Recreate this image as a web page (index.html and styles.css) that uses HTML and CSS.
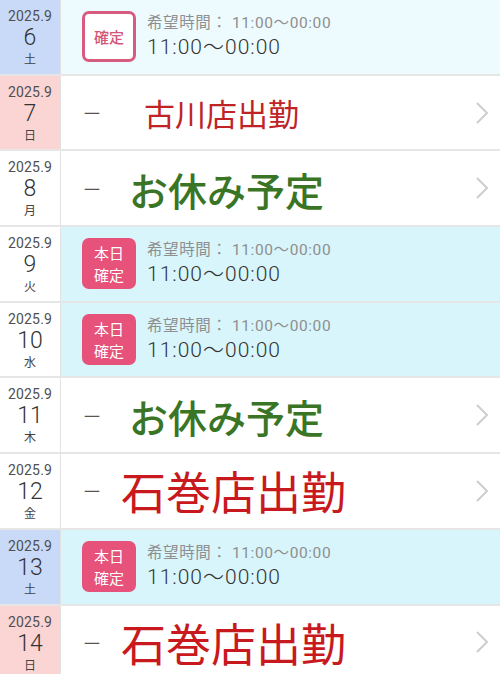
FILE: index.html
```html
<!DOCTYPE html>
<html lang="ja">
<head>
<meta charset="utf-8">
<link rel="stylesheet" href="styles.css">
</head>
<body>
<div class="list">
  <div class="row">
    <div class="date sat"><span class="ym">2025.9</span><span class="day">6</span><span class="wd">土</span></div>
    <div class="body pale">
      <div class="badge outline">確定</div>
      <div class="hope"><div class="hope-label">希望時間： 11:00〜00:00</div><div class="hope-time">11:00〜00:00</div></div>
    </div>
  </div>
  <div class="row">
    <div class="date sun"><span class="ym">2025.9</span><span class="day">7</span><span class="wd">日</span></div>
    <div class="body">
      <span class="dash">－</span><span class="status furukawa">古川店出勤</span>
      <svg class="chev" viewBox="0 0 14 22"><polyline points="2,1 12,11 2,21"/></svg>
    </div>
  </div>
  <div class="row">
    <div class="date"><span class="ym">2025.9</span><span class="day">8</span><span class="wd">月</span></div>
    <div class="body">
      <span class="dash">－</span><span class="status rest">お休み予定</span>
      <svg class="chev" viewBox="0 0 14 22"><polyline points="2,1 12,11 2,21"/></svg>
    </div>
  </div>
  <div class="row">
    <div class="date"><span class="ym">2025.9</span><span class="day">9</span><span class="wd">火</span></div>
    <div class="body today">
      <div class="badge filled">本日<br>確定</div>
      <div class="hope"><div class="hope-label">希望時間： 11:00〜00:00</div><div class="hope-time">11:00〜00:00</div></div>
    </div>
  </div>
  <div class="row">
    <div class="date"><span class="ym">2025.9</span><span class="day">10</span><span class="wd">水</span></div>
    <div class="body today">
      <div class="badge filled">本日<br>確定</div>
      <div class="hope"><div class="hope-label">希望時間： 11:00〜00:00</div><div class="hope-time">11:00〜00:00</div></div>
    </div>
  </div>
  <div class="row">
    <div class="date"><span class="ym">2025.9</span><span class="day">11</span><span class="wd">木</span></div>
    <div class="body">
      <span class="dash">－</span><span class="status rest">お休み予定</span>
      <svg class="chev" viewBox="0 0 14 22"><polyline points="2,1 12,11 2,21"/></svg>
    </div>
  </div>
  <div class="row">
    <div class="date"><span class="ym">2025.9</span><span class="day">12</span><span class="wd">金</span></div>
    <div class="body">
      <span class="dash">－</span><span class="status ishinomaki">石巻店出勤</span>
      <svg class="chev" viewBox="0 0 14 22"><polyline points="2,1 12,11 2,21"/></svg>
    </div>
  </div>
  <div class="row">
    <div class="date sat"><span class="ym">2025.9</span><span class="day">13</span><span class="wd">土</span></div>
    <div class="body today">
      <div class="badge filled">本日<br>確定</div>
      <div class="hope"><div class="hope-label">希望時間： 11:00〜00:00</div><div class="hope-time">11:00〜00:00</div></div>
    </div>
  </div>
  <div class="row">
    <div class="date sun"><span class="ym">2025.9</span><span class="day">14</span><span class="wd">日</span></div>
    <div class="body">
      <span class="dash">－</span><span class="status ishinomaki">石巻店出勤</span>
      <svg class="chev" viewBox="0 0 14 22"><polyline points="2,1 12,11 2,21"/></svg>
    </div>
  </div>
</div>
</body>
</html>
```
FILE: styles.css
```css
html, body {
  margin: 0;
  padding: 0;
  background: #ffffff;
}
body {
  font-family: Roboto, "Noto Sans CJK JP", sans-serif;
  color: #333;
  width: 500px;
  height: 674px;
  overflow: hidden;
}
.list {
  display: flex;
  flex-direction: column;
}
.row {
  display: grid;
  grid-template-columns: 61px 1fr;
  height: 73.7px;
  border-bottom: 2px solid #e6e6e6;
  flex: none;
}
.date {
  display: flex;
  flex-direction: column;
  align-items: center;
  padding-top: 8px;
  border-right: 1.5px solid #e2e2e2;
  background: #ffffff;
  color: #4a4a4a;
}
.date.sat { background: #c9daf8; }
.date.sun { background: #fbd4d4; }
.ym {
  font-size: 14px;
  line-height: 17px;
  letter-spacing: 0.2px;
  color: #505050;
}
.day {
  font-size: 23px;
  font-weight: 300;
  line-height: 26px;
  color: #333;
}
.wd {
  font-family: "Noto Sans CJK JP", sans-serif;
  font-size: 12px;
  line-height: 15px;
  color: #444;
}
.body {
  display: flex;
  align-items: center;
  background: #ffffff;
}
.body.pale { background: #eefbfe; }
.body.today { background: #d8f5fb; }
.badge {
  box-sizing: border-box;
  width: 54px;
  height: 51px;
  margin-left: 21px;
  border-radius: 7px;
  display: flex;
  align-items: center;
  justify-content: center;
  text-align: center;
  font-family: "Noto Sans CJK JP", sans-serif;
}
.badge.outline {
  border: 3px solid #d75a7f;
  background: #ffffff;
  color: #d4557a;
  font-size: 15px;
  font-weight: 500;
}
.badge.filled {
  background: #e6527a;
  color: #ffffff;
  font-size: 15px;
  line-height: 22px;
}
.hope {
  margin-left: 11px;
  display: flex;
  flex-direction: column;
  padding-top: 1px;
}
.hope-label {
  font-family: Roboto, "Noto Sans CJK JP", sans-serif;
  font-size: 15.5px;
  line-height: 20px;
  color: #8f8f8f;
  letter-spacing: 0.6px;
}
.hope-time {
  font-size: 21px;
  font-weight: 300;
  line-height: 28px;
  color: #333;
  letter-spacing: 1px;
}
.dash {
  margin-left: 21px;
  font-family: "Noto Sans CJK JP", sans-serif;
  font-size: 20px;
  color: #555;
}
.status {
  font-family: "Noto Sans CJK JP", sans-serif;
  line-height: 1;
}
.status.furukawa {
  margin-left: 42px;
  font-size: 31px;
  color: #c02326;
}
.status.rest {
  margin-left: 27px;
  font-size: 39px;
  font-weight: 500;
  color: #3a7526;
  padding-top: 2px;
}
.status.ishinomaki {
  margin-left: 19px;
  font-size: 45px;
  color: #c8191e;
}
.chev {
  margin-left: auto;
  margin-right: 11px;
  width: 14px;
  height: 22px;
  fill: none;
  stroke: #cdcdcd;
  stroke-width: 2;
}
```
